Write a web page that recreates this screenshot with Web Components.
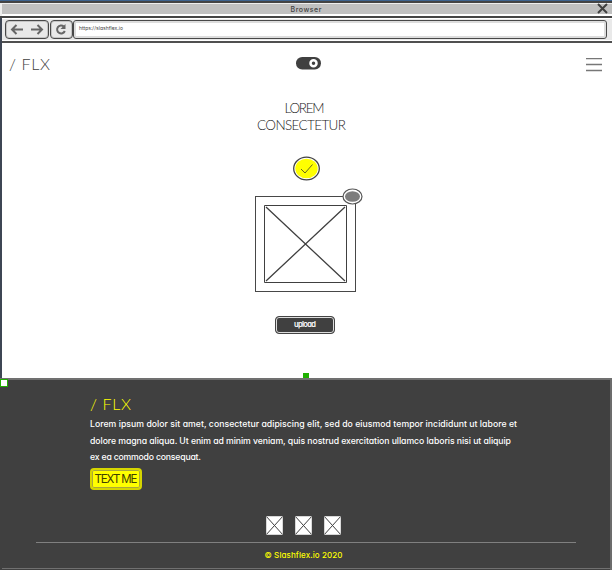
<!DOCTYPE html>
<html lang="en">
<head>
<meta charset="utf-8">
<title>Browser</title>
<style>
html,body{margin:0;width:612px;height:570px;overflow:hidden;background:#414141}
body{font-family:Inter,"Noto Sans",sans-serif;color:#404040}
</style>
</head>
<body>
<flx-window></flx-window>
<script>
const define = (name, html, ready) => customElements.define(name, class extends HTMLElement {
  connectedCallback() {
    if (this.shadowRoot) return;
    this.attachShadow({mode: 'open'}).innerHTML = html;
    if (ready) ready(this);
  }
});

/* A single line of text spread by letter spacing over the width in "fit". */
define('flx-line', `<style>
:host{display:block;white-space:pre;line-height:var(--lh,16px);height:var(--lh,16px);font-feature-settings:"cv11","calt" 0}
:host([thin]){font-family:Lato,sans-serif;font-weight:300}
span{display:inline-block}
</style><span><slot></slot></span>`, el => {
  const span = el.shadowRoot.querySelector('span');
  const fit = +el.getAttribute('fit');
  const gap = (fit - span.getBoundingClientRect().width) / (el.textContent.length - 1);
  span.style.letterSpacing = gap + 'px';
  span.style.marginRight = -gap + 'px';
});

define('flx-titlebar', `<style>
:host{display:flex;box-sizing:border-box;height:18px;background:#c0c0c0;border-top:1px solid #3d638f;border-bottom:2px solid #444;box-shadow:inset 0 2px #444,inset 2px 3px #eee,inset 0 -2px #fff;position:relative;justify-content:center;padding-top:3px}
flx-line{font-size:7px;font-weight:500;--lh:11px}
svg{position:absolute;right:4px;top:2px}
</style><flx-line fit="31">Browser</flx-line>
<svg width="11" height="11"><path d="M1 1L10 10M10 1L1 10" stroke="#404040" stroke-width="2"/></svg>`);

define('flx-toolbar', `<style>
:host{display:flex;box-sizing:border-box;height:25px;margin-left:2px;padding:2px 5px 2px 3px;background:#e9e9e9;border-bottom:2px solid #505050;box-shadow:inset 0 1px #fff,inset 0 -1px #fff}
.b{box-sizing:border-box;height:19px;border:1px solid #484848;border-radius:4px;background:#e8e8e8;box-shadow:inset 0 0 0 1px #c4c4c4}
.n{width:44px;margin-right:1px}.r{width:23px}
svg{display:block}
.u{flex:1;background:#fff;padding:3px 0 0 5px;border-radius:3px;box-shadow:inset 0 0 0 2px #ddd}
flx-line{font-size:5px;--lh:9px;color:#444}
</style>
<div class="b n"><svg width="42" height="17"><path d="M6 8.500H17M10.500 4L6 8.500L10.500 13M25 8.500H36M31.500 4L36 8.500L31.500 13" fill="none" stroke="#666" stroke-width="2"/></svg></div>
<div class="b r"><svg width="21" height="17"><path d="M12.800 5.500A4 4 0 1 0 13.800 10" fill="none" stroke="#666" stroke-width="2"/><path d="M14.500 3V8H9.500Z" fill="#666"/></svg></div>
<div class="b u"><flx-line fit="44">https://slashflex.io</flx-line></div>`);

define('flx-picture', `<style>
:host{display:block}svg{display:block;width:100%;height:100%}
</style><svg viewBox="0 0 83 78" preserveAspectRatio="none"><rect x=".5" y=".5" width="82" height="77" fill="#fff" stroke="var(--frame,#404040)" vector-effect="non-scaling-stroke"/><path d="M2 2L81 76M81 2L2 76" stroke="#404040" stroke-width="var(--line,1.3px)" style="stroke-width:var(--line,1.3px)" vector-effect="non-scaling-stroke"/></svg>`);

define('flx-card', `<style>
:host{display:block;position:relative;box-sizing:border-box;width:101px;height:96px;border:1px solid #484848;padding:8px}
flx-picture{width:83px;height:78px}
svg{position:absolute;left:86px;top:-9px}
</style><flx-picture></flx-picture>
<svg width="21" height="17"><ellipse cx="10.500" cy="8.500" rx="9.500" ry="7.500" fill="#fff" stroke="#555" stroke-width="1.200"/><ellipse cx="10.500" cy="8.500" rx="7.500" ry="5.300" fill="#7d7d7d"/></svg>`);

define('flx-button', `<style>
:host{display:flex;box-sizing:border-box;justify-content:center;align-items:center;width:60px;height:18px;border:1px solid #444;border-radius:4px;background:#404040;color:#fff;box-shadow:inset 0 0 0 1px #ddd;font-size:7.500px;font-weight:600}
:host([yellow]){width:52px;height:22px;background:#ff0;border:2px solid #d5d500;color:#404000;box-shadow:inset 0 0 0 1px #aaa83a;font-size:11.500px;font-weight:400}
</style><slot></slot>`);

define('flx-main', `<style>
:host{display:flex;flex-direction:column;align-items:center;box-sizing:border-box;height:335px;margin-left:2px;padding-top:12px;background:#fff}
header{display:grid;grid-template-columns:287px 1fr 16px;justify-items:center;align-self:stretch;height:20px;padding:0 10px 0 7px}
header flx-line{font-size:16px;--lh:18px;justify-self:start}
header svg{display:block}
.t{margin-top:2px;justify-self:start}.m{margin-top:3px}
h1{display:flex;flex-direction:column;align-items:center;margin:25px 11px 0 0;font-size:13.500px;--lh:17px;color:#222}
h1 flx-line:first-child{margin-left:6px}
.ok{margin:22px 0 0;display:block}
flx-card{margin:15px 3px 0 0}
flx-button{margin:24px 4px 0 0}
</style>
<header><flx-line thin fit="41">/ FLX</flx-line>
<svg class="t" width="25" height="13"><rect width="25" height="12.500" rx="6.200" fill="#404040"/><circle cx="17.500" cy="6.300" r="3" fill="#404040" stroke="#fff" stroke-width="2.500"/></svg>
<svg class="m" width="16" height="14"><path d="M0 .5H16M0 6.500H16M0 12.500H16" stroke="#777" stroke-width="1.500"/></svg></header>
<h1><flx-line thin fit="40">LOREM</flx-line><flx-line thin fit="89">CONSECTETUR</flx-line></h1>
<svg class="ok" width="28" height="25"><ellipse cx="13.500" cy="12.500" rx="12.800" ry="11.400" fill="#fff" stroke="#444" stroke-width="1.300"/><ellipse cx="13.500" cy="12.500" rx="11.200" ry="9.800" fill="#ff0"/><path d="M8 13L12 17L19.500 8.500" fill="none" stroke="#666620"/></svg>
<flx-card></flx-card>
<flx-button><flx-line fit="22">upload</flx-line></flx-button>`);

define('flx-footer', `<style>
:host{display:block;box-sizing:border-box;height:192px;background:#404040;border-top:2px solid #707070;color:#fff;position:relative;box-shadow:inset -2px 0 #6c6c6c}
.c{padding:14px 0 0 90px}
.logo{color:#ff0;font-size:16px;--lh:20px}
p{margin:2px 0 0;font-size:8.700px;font-weight:500;--lh:16.500px}
flx-button{margin-top:2px}
.i{display:flex;justify-content:center;gap:12px;margin:26px 6px 0 0}
.i flx-picture{width:17px;height:19px;--frame:#ccc;--line:1px}
.f{margin:7px 36px 0;border-top:1px solid #808080;display:flex;justify-content:center;padding:4px 5px 0 0;color:#ff0;font-size:8px;font-weight:500}
.end{position:absolute;left:2px;right:0;bottom:1px;height:1px;background:#707070}
</style>
<div class="c"><flx-line class="logo" thin fit="41">/ FLX</flx-line>
<p><flx-line fit="427">Lorem ipsum dolor sit amet, consectetur adipiscing elit, sed do eiusmod tempor incididunt ut labore et</flx-line><flx-line fit="421">dolore magna aliqua. Ut enim ad minim veniam, quis nostrud exercitation ullamco laboris nisi ut aliquip</flx-line><flx-line fit="111">ex ea commodo consequat.</flx-line></p>
<flx-button yellow><flx-line fit="43">TEXT ME</flx-line></flx-button></div>
<div class="i"><flx-picture></flx-picture><flx-picture></flx-picture><flx-picture></flx-picture></div>
<div class="f"><flx-line fit="78">© Slashflex.io 2020</flx-line></div>
<div class="end"></div>`);

define('flx-window', `<style>
:host{display:block;position:relative;width:612px;height:570px;background:#3e4654;overflow:hidden}
i{position:absolute;box-sizing:border-box}
.a{left:303px;top:373px;width:6px;height:5px;background:#1fb000}
.b{left:0;top:379px;width:8px;height:8px;background:#fff;border:1px solid #1fb000}
</style><flx-titlebar></flx-titlebar><flx-toolbar></flx-toolbar><flx-main></flx-main><flx-footer></flx-footer><i class="a"></i><i class="b"></i>`);
</script>
</body>
</html>
